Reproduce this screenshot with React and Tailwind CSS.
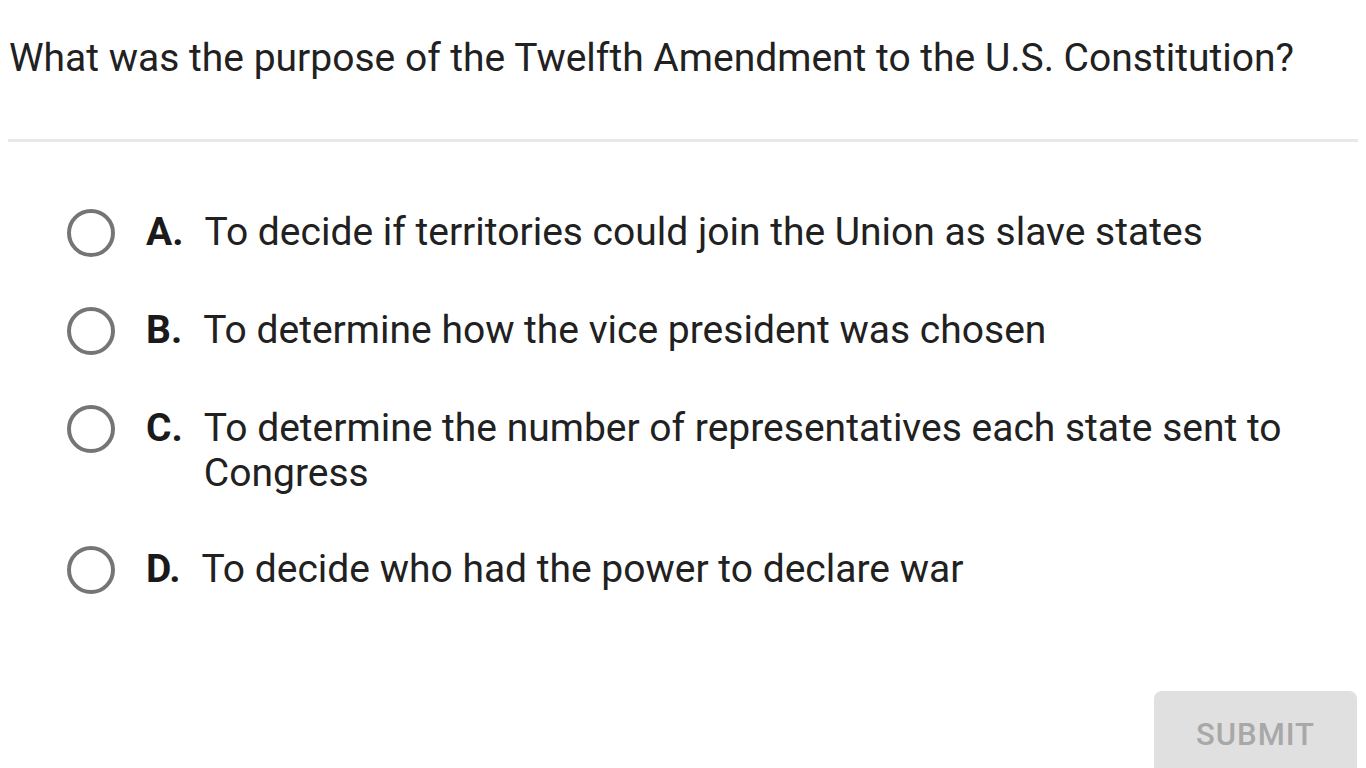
export default function App() {
  const options = [
    { key: "A.", text: "To decide if territories could join the Union as slave states" },
    { key: "B.", text: "To determine how the vice president was chosen" },
    {
      key: "C.",
      text: "To determine the number of representatives each state sent to Congress",
    },
    { key: "D.", text: "To decide who had the power to declare war" },
  ];

  return (
    <div
      className="w-[1366px] h-[768px] overflow-hidden bg-white text-[#212121] relative"
      style={{ fontFamily: "Roboto, 'Liberation Sans', sans-serif" }}
    >
      <div className="pl-[9px] pt-[34px] pr-[8px]">
        <h1 className="text-[39px] leading-[48px] font-normal">
          What was the purpose of the Twelfth Amendment to the U.S. Constitution?
        </h1>
        <div className="mt-[57px] h-[3px] bg-[#e8e8e8] -ml-[1px]" />
      </div>

      <ul className="pl-[67px] pr-[40px] pt-[68px] flex flex-col gap-[51px]">
        {options.map((o) => (
          <li key={o.key} className="flex items-start">
            <span className="-mt-[1px] w-[48px] h-[48px] shrink-0 rounded-full border-[4px] border-[#757575]" />
            <span className="ml-[31px] mr-[21px] shrink-0 text-[39px] leading-[45px] font-bold text-[#1a1a1a]">
              {o.key}
            </span>
            <span className="text-[39px] leading-[45px]">{o.text}</span>
          </li>
        ))}
      </ul>

      <button className="absolute left-[1154px] top-[691px] w-[203px] h-[90px] rounded-[8px] bg-[#e0e0e0] text-[#a8a8a8] text-[31px] tracking-[1px] font-medium flex items-start justify-center">
        <span className="mt-[21px]">SUBMIT</span>
      </button>
    </div>
  );
}
